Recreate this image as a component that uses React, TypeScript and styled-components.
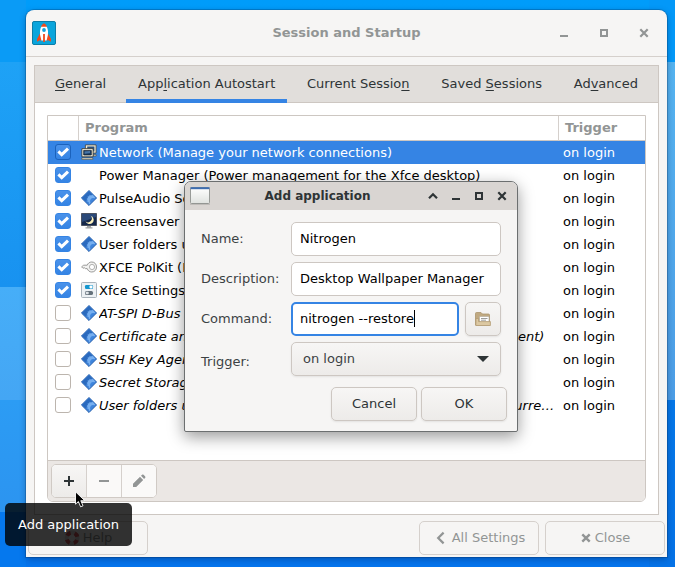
import React from "react";
import styled, { createGlobalStyle, css } from "styled-components";

const GlobalStyle = createGlobalStyle`
  *, *::before, *::after { box-sizing: border-box; }
  body { margin: 0; }
  body, button, input, select {
    font-family: "DejaVu Sans", sans-serif;
    font-size: 13px;
    line-height: 16px;
  }
  button, input, select { margin: 0; }
`;

const Desktop = styled.main`
  position: relative;
  display: flex;
  min-height: 100vh;
  padding: 10px 8px 10px 26px;
  background:
    linear-gradient(#0a9bf6 0 62px, #1ea2f6 62px, #1892f0 287px, #46aef8 287px, #44a6f4 400px, #2c9cf4 400px, #2c94f0 512px, #0578ee 512px) left / 26px 100% no-repeat,
    linear-gradient(#0398f8 0 62px, #55b3f0 62px, #4c9de6 400px, #0577e8 400px, #0572e6) right / 26px 100% no-repeat,
    linear-gradient(#009cfa, #0598f4 50%, #0574ec 90%);
`;

const Window = styled.section`
  position: relative;
  display: flex;
  flex: 1;
  min-width: 0;
  flex-direction: column;
  border-radius: 8px 8px 0 0;
  background: #f6f5f4;
  box-shadow: 0 0 0 1px rgba(0, 30, 70, 0.22), 0 2px 6px rgba(0, 20, 60, 0.35);
`;

const TitleBar = styled.header`
  display: grid;
  grid-template-columns: 112px 1fr 112px;
  align-items: center;
  height: 47px;
  padding: 0 6px;
  border-bottom: 1px solid #d5d0cc;
`;

const WindowTitle = styled.h1`
  margin: 0;
  color: #929595;
  font-size: 13px;
  line-height: 20px;
  text-align: center;
  white-space: nowrap;
`;

const Controls = styled.div<{ $gap: number }>`
  display: flex;
  justify-content: flex-end;
  gap: ${(p) => p.$gap}px;
`;

const IconButton = styled.button<{ $size: number }>`
  display: flex;
  align-items: center;
  justify-content: center;
  width: ${(p) => p.$size}px;
  height: ${(p) => p.$size}px;
  padding: 0;
  border: 0;
  background: none;
  color: inherit;
`;

const MainControls = styled(Controls)`
  padding-right: 7px;
  color: #929595;
`;

const Notebook = styled.div`
  display: flex;
  flex: 1;
  flex-direction: column;
  margin: 8px 8px 6px;
  border: 1px solid #cdc7c2;
  background: #fff;
`;

const TabList = styled.nav`
  display: flex;
  justify-content: space-between;
  height: 37px;
  padding: 0 8px;
  border-bottom: 1px solid #cdc7c2;
  background: #e1dedb;
`;

const Tab = styled.button<{ $active?: boolean }>`
  height: 37px;
  padding: 0 12px;
  border: 0;
  border-bottom: 4px solid ${(p) => (p.$active ? "#3584e4" : "transparent")};
  border-top: 2px solid transparent;
  background: none;
  color: #2e3436;
  white-space: nowrap;

  u { text-underline-offset: 2px; }
`;

const Panel = styled.div`
  display: flex;
  flex: 1;
  flex-direction: column;
  margin: 12px;
  border: 1px solid #cdc7c2;
  border-radius: 0 0 6px 6px;
  overflow: hidden;
`;

const TableArea = styled.div`
  flex: 1;
`;

const Table = styled.table`
  width: 100%;
  table-layout: fixed;
  border-collapse: separate;
  border-spacing: 0;
`;

const HeadCell = styled.th`
  height: 25px;
  padding: 0 6px;
  border-bottom: 1px solid #cdc7c2;
  color: #929595;
  text-align: left;

  &:not(:last-child) { border-right: 1px solid #d5d0cc; }
`;

const Row = styled.tr<{ $selected?: boolean; $italic?: boolean }>`
  height: 23px;
  color: ${(p) => (p.$selected ? "#fff" : "#000")};
  background: ${(p) => (p.$selected ? "#3584e4" : "#fff")};
  font-style: ${(p) => (p.$italic ? "italic" : "normal")};
`;

const Cell = styled.td`
  padding: 3px 4px 2px;
  line-height: 18px;
  vertical-align: top;
`;

const TriggerCell = styled(Cell)`
  font-style: normal;
`;

const CheckCell = styled(Cell)`
  padding: 3px 7px 2px;
`;

const ProgramCell = styled(Cell)`
  padding: 3px 0 2px 2px;
`;

const Program = styled.label`
  display: flex;
  align-items: flex-start;
  gap: 2px;

  span {
    overflow: hidden;
    text-overflow: ellipsis;
    white-space: nowrap;
  }
`;

const IconSlot = styled.i`
  flex: none;
  width: 16px;
  height: 16px;

  svg { display: block; }
`;

const checkMark = (
  <svg width="16" height="16" viewBox="0 0 16 16" fill="none" aria-hidden="true">
    <path d="M3.4 7.4 L6.7 10.6 L13 4.6" stroke="#fff" strokeWidth="3" />
  </svg>
);

const CheckBox = styled.span<{ $selected?: boolean }>`
  display: grid;
  width: 16px;
  height: 16px;

  & > * { grid-area: 1 / 1; }

  input {
    width: 16px;
    height: 16px;
    margin: 0;
    border: 1px solid #bcb5ae;
    border-radius: 3px;
    background: #fff;
    appearance: none;
  }
  input:checked {
    border-color: ${(p) => (p.$selected ? "#1b62bc" : "#3584e4")};
    background: linear-gradient(#4a92ea, #3584e4);
  }
  svg {
    pointer-events: none;
    visibility: hidden;
  }
  input:checked + svg { visibility: visible; }
`;

const ToolBar = styled.div`
  height: 41px;
  padding: 3px;
  border-top: 1px solid #cdc7c2;
  background: #ebe7e4;
`;

const ToolGroup = styled.div`
  display: inline-flex;
  border: 1px solid #d0cac5;
  border-radius: 5px;
  overflow: hidden;
  background: #faf9f8;
`;

const ToolButton = styled.button`
  display: flex;
  align-items: center;
  justify-content: center;
  width: 35px;
  height: 32px;
  padding: 0;
  border: 0;
  border-left: 1px solid #d5d0cc;
  background: linear-gradient(#f7f6f5, #edebe9);
  color: #2e3436;

  &:first-child {
    width: 34px;
    border-left: 0;
  }
  &:disabled {
    background: #faf9f8;
    color: #929595;
  }
`;

const ActionBar = styled.footer`
  display: flex;
  gap: 6px;
  padding: 0 2px 2px;

  & > :first-child { margin-right: auto; }
`;

const buttonBase = css`
  display: flex;
  align-items: center;
  justify-content: center;
  height: 34px;
  padding: 0;
  border: 1px solid #cdc7c2;
  border-radius: 5px;
`;

const FlatButton = styled.button`
  ${buttonBase}
  gap: 3px;
  width: 120px;
  border-color: #d5d0cc;
  background: #f6f5f4;
  color: #929595;
`;

const PushButton = styled.button<{ $width: number }>`
  ${buttonBase}
  flex: none;
  width: ${(p) => p.$width}px;
  background: linear-gradient(#f7f6f5, #edebe9);
  color: #2e3436;
  box-shadow: 0 1px 2px rgba(0, 0, 0, 0.08);
`;

const Dialog = styled.section`
  position: absolute;
  top: 171px;
  left: 158px;
  width: 334px;
  border: 1px solid #6c6f70;
  border-radius: 7px 7px 2px 2px;
  background: #f6f5f4;
  box-shadow: 0 5px 16px rgba(0, 0, 0, 0.4);
  color: #3c4244;
`;

const DialogBar = styled.header`
  display: grid;
  grid-template-columns: 24px 1fr 88px;
  align-items: center;
  height: 28px;
  padding: 0 7px 0 4px;
  border-radius: 6px 6px 0 0;
  background: #d9d5d2;
  color: #2e3436;
`;

const DialogTitle = styled.h2`
  margin: 0;
  font-size: 12px;
  line-height: 16px;
  text-align: center;
  white-space: nowrap;
`;

const Form = styled.form`
  padding: 12px 10px 10px 16px;
`;

const Fields = styled.div`
  display: grid;
  grid-template-columns: 84px 1fr;
  align-items: center;
  gap: 6px;
  padding-right: 6px;
`;

const FieldLabel = styled.label<{ $low?: boolean }>`
  padding-top: ${(p) => (p.$low ? 6 : 0)}px;
`;

const FieldLine = styled.div`
  display: flex;
  gap: 6px;
`;

const TextBox = styled.input`
  width: 100%;
  min-width: 0;
  height: 34px;
  padding: 0 8px 2px;
  border: 1px solid #cdc7c2;
  border-radius: 5px;
  background: #fff;
  color: #000;
  outline: none;

  &:focus {
    padding: 0 7px 2px;
    border: 2px solid #3584e4;
    caret-color: transparent;
  }
`;

const CommandEntry = styled.div`
  position: relative;
  flex: 1;
  min-width: 0;
`;

const Caret = styled.span`
  position: absolute;
  top: 8px;
  left: 123px;
  width: 1px;
  height: 17px;
  background: #000;
`;

const SelectBox = styled.div`
  display: grid;
  align-items: center;

  & > * { grid-area: 1 / 1; }

  select {
    height: 34px;
    padding: 0 11px;
    border: 1px solid #cdc7c2;
    border-radius: 5px;
    background: linear-gradient(#f7f6f5, #edebe9);
    box-shadow: 0 1px 2px rgba(0, 0, 0, 0.08);
    color: #3c4244;
    appearance: none;
  }
  svg {
    justify-self: end;
    margin-right: 12px;
    pointer-events: none;
  }
`;

const DialogActions = styled.div`
  display: flex;
  justify-content: flex-end;
  gap: 4px;
  margin-top: 11px;
`;

const Tooltip = styled.div`
  position: absolute;
  top: 503px;
  left: 5px;
  padding: 13px;
  border-radius: 5px;
  background: rgba(0, 0, 0, 0.8);
  color: #fff;
  line-height: 17px;
  white-space: nowrap;
`;

const Pointer = styled.svg`
  position: absolute;
  top: 491px;
  left: 75px;
`;

const RocketIcon = () => (
  <svg width="24" height="24" viewBox="0 0 24 24" aria-hidden="true">
    <rect x=".5" y=".5" width="23" height="23" rx="1.5" fill="#0aa5dc" stroke="#0c7ea8" />
    <path d="M8 12.5 L5 18 V20.8 L8.2 19 L9.5 20.5 V12Z M16 12.5 L19 18 V20.8 L15.8 19 L14.5 20.5 V12Z" fill="#f04a1c" />
    <path d="M12 3 C8.5 5.5 7.6 9 8.1 14 L9.4 19.5 H14.6 L15.9 14 C16.4 9 15.5 5.5 12 3Z" fill="#fff" />
    <path d="M12 2.3 C10.5 3.3 9.5 4.4 9 5.8 H15 C14.5 4.4 13.5 3.3 12 2.3Z M11.1 13h1.8v8h-1.8z" fill="#f04a1c" />
    <circle cx="12" cy="9" r="1.9" fill="#14a2dc" />
  </svg>
);

const NetworkIcon = () => (
  <svg width="16" height="16" viewBox="0 0 16 16" aria-hidden="true">
    <path d="M4.4 .9h10.7v8.2H4.4z" fill="#f1ecd8" stroke="#45443a" strokeWidth=".8" />
    <path d="M6.2 2.6h7.2v5H6.2z" fill="#2a507c" />
    <path d="M12.2 10.6h3v1.4h-3z" fill="#e4dfca" stroke="#45443a" strokeWidth=".6" />
    <path d="M.9 4.6h11.2v8.2H.9z" fill="#f7f2de" stroke="#33322a" strokeWidth=".8" />
    <path d="M2.7 6.4h7.6v4.6H2.7z" fill="#1b406b" stroke="#0b1726" strokeWidth=".7" />
    <path d="M3.6 7.6 9 7.1v1.8L3.6 9.8z" fill="#4875a5" />
    <path d="M.8 13.9h11v1.5H.8z" fill="#eee9d6" stroke="#45443a" strokeWidth=".6" />
  </svg>
);

const GearDiamondIcon = () => (
  <svg width="16" height="16" viewBox="0 0 16 16" aria-hidden="true">
    <path d="M8 .4 15.6 8 8 15.6 .4 8Z" fill="#3a7fd6" stroke="#1b56a6" strokeWidth=".8" strokeLinejoin="round" />
    <path d="M8 1.2 11.2 4.4 4.4 11.2 1.2 8Z" fill="#1f5cae" opacity=".6" />
    <path d="M12.6 5.8 11 4.8 10.1 5.7 8.7 4.8 8.2 6.2 6.6 6.4 6.9 7.9 5.5 8.9 6.7 10.1 6.1 11.6 7.6 12 8 14.4 9.6 12.8 C8.8 10 10 8 13 8.4 L14.4 8Z" fill="#76aff0" />
    <path d="M9.6 12.8 C8.8 10 10 8 13 8.4 L14 8.4Z" fill="#3f85dc" />
  </svg>
);

const ScreensaverIcon = () => (
  <svg width="16" height="16" viewBox="0 0 16 16" aria-hidden="true">
    <path d="M.5 .5h15v12H.5z" fill="#16294b" stroke="#4c5361" />
    <path d="M1 1h14v3L1 9z" fill="#2b4979" />
    <path d="M9.6 2.8 A4.2 4.2 0 1 1 4.5 8.2 A3.6 3.6 0 0 0 9.6 2.8Z" fill="#fdf2bd" />
    <path d="M6 13h4v1.2H6zM4.5 14.2h7v1.3h-7z" fill="#a3a5a6" />
  </svg>
);

const KeyIcon = () => (
  <svg width="16" height="16" viewBox="0 0 16 16" aria-hidden="true">
    <path d="M6.2 6.2 H2.7 L.6 7.8 L2 9.3 L3.2 8.6 L4.3 9.6 H6.2 C7 11.8 8.6 13 10.8 13 C13.7 13 15.5 10.8 15.5 8 C15.5 5 13.5 3 10.8 3 C8.5 3 6.9 4.3 6.2 6.2Z" fill="#f2f2f1" stroke="#91918f" strokeWidth=".9" />
    <circle cx="11" cy="8" r="2.6" fill="#fff" stroke="#a0a09e" strokeWidth=".8" />
  </svg>
);

const SettingsIcon = () => (
  <svg width="16" height="16" viewBox="0 0 16 16" aria-hidden="true">
    <rect x=".5" y=".5" width="15" height="15" rx="1" fill="#edf1f4" stroke="#a9b2ba" />
    <rect x="4" y="3" width="8" height="4" rx="1.2" fill="#1496cf" />
    <rect x="8.5" y="3.6" width="3" height="2.8" rx=".8" fill="#fff" />
    <rect x="4" y="9" width="8" height="4" rx="1.6" fill="#65717b" />
    <rect x="4.7" y="9.8" width="3" height="2.4" rx=".8" fill="#dfe4e8" />
  </svg>
);

const MinimizeGlyph = () => (
  <svg width="10" height="10" viewBox="0 0 10 10" aria-hidden="true">
    <path d="M1 8h8" stroke="currentColor" strokeWidth="2" />
  </svg>
);

const MaximizeGlyph = () => (
  <svg width="10" height="10" viewBox="0 0 10 10" aria-hidden="true">
    <path d="M2 2h6v6H2z" fill="none" stroke="currentColor" strokeWidth="2" />
  </svg>
);

const CloseGlyph = () => (
  <svg width="10" height="10" viewBox="0 0 10 10" aria-hidden="true">
    <path d="M1.3 1.3 8.7 8.7M8.7 1.3 1.3 8.7" stroke="currentColor" strokeWidth="2.2" />
  </svg>
);

const ShadeGlyph = () => (
  <svg width="10" height="10" viewBox="0 0 10 10" aria-hidden="true">
    <path d="M1 7.3 5 3.3 9 7.3" fill="none" stroke="currentColor" strokeWidth="2.2" />
  </svg>
);

const AppWindowIcon = () => (
  <svg width="22" height="20" viewBox="0 0 22 20" aria-hidden="true">
    <defs>
      <linearGradient id="pane" x2="0" y2="1">
        <stop stopColor="#fff" />
        <stop offset="1" stopColor="#dfe2df" />
      </linearGradient>
    </defs>
    <rect x="1.5" y="1.5" width="19" height="16" rx="1" fill="url(#pane)" stroke="#989b98" />
    <path d="M1.5 2.2h19" stroke="#3d6cb0" strokeWidth="2" />
    <path d="M1 18.3h20" stroke="#000" strokeOpacity=".15" />
  </svg>
);

const FolderIcon = () => (
  <svg width="16" height="16" viewBox="0 0 16 16" aria-hidden="true">
    <path d="M.5 2.5 Q.5 1.5 1.5 1.5 H6 L7.5 3 H13.5 Q14.5 3 14.5 4 V14 H.5Z" fill="#c0a981" stroke="#ab946c" strokeWidth=".8" />
    <path d="M4.5 5.5h9.5v6H4.5z" fill="#fff" stroke="#b0a898" strokeWidth=".6" />
    <path d="M6 7.5h6.5M6 9.2h5" stroke="#9d9d9b" />
    <path d="M.8 14.5 1 7.5 H3.6 V10.6 H15.4 V14.5Z" fill="#dcc8a2" stroke="#b39b72" strokeWidth=".8" />
  </svg>
);

const LifebuoyIcon = () => (
  <svg width="16" height="16" viewBox="0 0 16 16" fill="none" aria-hidden="true">
    <circle cx="8" cy="8" r="5.4" stroke="#dcd8d6" strokeWidth="4" />
    <circle cx="8" cy="8" r="5.4" stroke="#d4585a" strokeWidth="4" strokeDasharray="4.24 4.24" strokeDashoffset="-2.12" />
  </svg>
);

const BackGlyph = () => (
  <svg width="16" height="16" viewBox="0 0 16 16" fill="none" aria-hidden="true">
    <path d="M10.6 2.6 5.2 8 10.6 13.4" stroke="currentColor" strokeWidth="2.2" />
  </svg>
);

const DismissGlyph = () => (
  <svg width="12" height="16" viewBox="0 0 12 16" fill="none" aria-hidden="true">
    <path d="M2.3 4.3 9.7 11.7M9.7 4.3 2.3 11.7" stroke="currentColor" strokeWidth="2.4" />
  </svg>
);

type Entry = {
  name: string;
  on: boolean;
  icon?: React.ReactNode;
};

const entries: Entry[] = [
  { name: "Network (Manage your network connections)", on: true, icon: <NetworkIcon /> },
  { name: "Power Manager (Power management for the Xfce desktop)", on: true },
  { name: "PulseAudio Sound System (Start the sound system)", on: true, icon: <GearDiamondIcon /> },
  { name: "Screensaver (Launch screensaver program)", on: true, icon: <ScreensaverIcon /> },
  { name: "User folders update (Update folder names)", on: true, icon: <GearDiamondIcon /> },
  { name: "XFCE PolKit (PolicyKit Authentication Agent)", on: true, icon: <KeyIcon /> },
  { name: "Xfce Settings Daemon (The Xfce Settings Daemon)", on: true, icon: <SettingsIcon /> },
  { name: "AT-SPI D-Bus Bus", on: false, icon: <GearDiamondIcon /> },
  { name: "Certificate and Key Storage (GNOME Keyring: PKCS#11 Component)", on: false, icon: <GearDiamondIcon /> },
  { name: "SSH Key Agent (GNOME Keyring: SSH Agent)", on: false, icon: <GearDiamondIcon /> },
  { name: "Secret Storage Service (GNOME Keyring: Secret Service)", on: false, icon: <GearDiamondIcon /> },
  { name: "User folders update (Update common folders names to match current locale)", on: false, icon: <GearDiamondIcon /> },
];

export default function App() {
  return (
    <Desktop>
      <GlobalStyle />
      <Window>
        <TitleBar>
          <RocketIcon />
          <WindowTitle>Session and Startup</WindowTitle>
          <MainControls $gap={20}>
            <IconButton $size={20} aria-label="Minimize"><MinimizeGlyph /></IconButton>
            <IconButton $size={20} aria-label="Maximize"><MaximizeGlyph /></IconButton>
            <IconButton $size={20} aria-label="Close window"><CloseGlyph /></IconButton>
          </MainControls>
        </TitleBar>

        <Notebook>
          <TabList>
            <Tab><u>G</u>eneral</Tab>
            <Tab $active>App<u>l</u>ication Autostart</Tab>
            <Tab>Current Sessio<u>n</u></Tab>
            <Tab>Saved <u>S</u>essions</Tab>
            <Tab>Ad<u>v</u>anced</Tab>
          </TabList>
          <Panel>
            <TableArea>
              <Table>
                <colgroup>
                  <col width="31" />
                  <col />
                  <col width="86" />
                </colgroup>
                <thead>
                  <tr>
                    <HeadCell />
                    <HeadCell>Program</HeadCell>
                    <HeadCell>Trigger</HeadCell>
                  </tr>
                </thead>
                <tbody>
                  {entries.map((entry, i) => (
                    <Row key={`${entry.name}-${i}`} $selected={i === 0} $italic={!entry.on}>
                      <CheckCell>
                        <CheckBox $selected={i === 0}>
                          <input type="checkbox" id={`entry-${i}`} defaultChecked={entry.on} />
                          {checkMark}
                        </CheckBox>
                      </CheckCell>
                      <ProgramCell>
                        <Program htmlFor={`entry-${i}`}>
                          <IconSlot>{entry.icon}</IconSlot>
                          <span>{entry.name}</span>
                        </Program>
                      </ProgramCell>
                      <TriggerCell>on login</TriggerCell>
                    </Row>
                  ))}
                </tbody>
              </Table>
            </TableArea>
            <ToolBar>
              <ToolGroup>
                <ToolButton aria-label="Add">
                  <svg width="12" height="12" viewBox="0 0 12 12" aria-hidden="true">
                    <path d="M6 1v10M1 6h10" stroke="currentColor" strokeWidth="2" />
                  </svg>
                </ToolButton>
                <ToolButton aria-label="Remove" disabled>
                  <svg width="12" height="12" viewBox="0 0 12 12" aria-hidden="true">
                    <path d="M1 6h10" stroke="currentColor" strokeWidth="2" />
                  </svg>
                </ToolButton>
                <ToolButton aria-label="Edit" disabled>
                  <svg width="14" height="14" viewBox="0 0 14 14" aria-hidden="true">
                    <path d="M1 13 V9.8 L8 2.8 L11.2 6 L4.2 13Z M9 1.8 L10.4 .6 Q11 .2 11.6 .8 L13.2 2.4 Q13.8 3 13.2 3.8 L12.1 5Z" fill="currentColor" />
                  </svg>
                </ToolButton>
              </ToolGroup>
            </ToolBar>
          </Panel>
        </Notebook>

        <ActionBar>
          <FlatButton><LifebuoyIcon />Help</FlatButton>
          <FlatButton><BackGlyph />All Settings</FlatButton>
          <FlatButton><DismissGlyph />Close</FlatButton>
        </ActionBar>

        <Dialog role="dialog" aria-labelledby="dialog-title">
          <DialogBar>
            <AppWindowIcon />
            <DialogTitle id="dialog-title">Add application</DialogTitle>
            <Controls $gap={7}>
              <IconButton $size={16} aria-label="Shade"><ShadeGlyph /></IconButton>
              <IconButton $size={16} aria-label="Minimize dialog"><MinimizeGlyph /></IconButton>
              <IconButton $size={16} aria-label="Maximize dialog"><MaximizeGlyph /></IconButton>
              <IconButton $size={16} aria-label="Close dialog"><CloseGlyph /></IconButton>
            </Controls>
          </DialogBar>
          <Form onSubmit={(e) => e.preventDefault()}>
            <Fields>
              <FieldLabel htmlFor="name">Name:</FieldLabel>
              <TextBox id="name" defaultValue="Nitrogen" />
              <FieldLabel htmlFor="description">Description:</FieldLabel>
              <TextBox id="description" defaultValue="Desktop Wallpaper Manager" />
              <FieldLabel htmlFor="command">Command:</FieldLabel>
              <FieldLine>
                <CommandEntry>
                  <TextBox id="command" defaultValue="nitrogen --restore" autoFocus spellCheck={false} />
                  <Caret />
                </CommandEntry>
                <PushButton type="button" $width={36} aria-label="Browse"><FolderIcon /></PushButton>
              </FieldLine>
              <FieldLabel htmlFor="trigger" $low>Trigger:</FieldLabel>
              <SelectBox>
                <select id="trigger" defaultValue="on login">
                  <option>on login</option>
                </select>
                <svg width="12" height="6" viewBox="0 0 12 6" aria-hidden="true">
                  <path d="M0 0h12L6 6Z" fill="#2e3436" />
                </svg>
              </SelectBox>
            </Fields>
            <DialogActions>
              <PushButton type="button" $width={86}>Cancel</PushButton>
              <PushButton type="submit" $width={86}>OK</PushButton>
            </DialogActions>
          </Form>
        </Dialog>
      </Window>

      <Tooltip role="tooltip">Add application</Tooltip>
      <Pointer width="11" height="17" viewBox="0 0 11 17" aria-hidden="true">
        <path d="M.5 .8V13.2L3.4 10.5 5.6 15.8 8 14.8 5.8 9.7H9.8Z" fill="#000" stroke="#fff" strokeWidth=".9" />
      </Pointer>
    </Desktop>
  );
}
